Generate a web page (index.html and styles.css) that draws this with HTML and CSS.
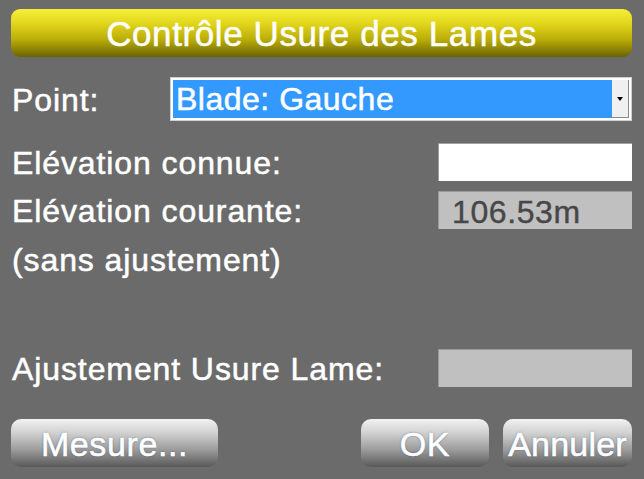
FILE: index.html
```html
<!DOCTYPE html>
<html lang="fr">
<head>
<meta charset="utf-8">
<title>Contrôle Usure des Lames</title>
<link rel="stylesheet" href="styles.css">
</head>
<body>
<div class="dialog">
  <div class="title">Contrôle Usure des Lames</div>

  <div class="row row-point">
    <span class="label">Point:</span>
    <div class="select">
      <span class="select-value">Blade: Gauche</span>
      <span class="select-btn"><span class="arrow"></span></span>
    </div>
  </div>

  <div class="row row-known">
    <span class="label">Elévation connue:</span>
    <div class="field field-white"></div>
  </div>

  <div class="row row-current">
    <span class="label">Elévation courante:</span>
    <div class="field field-gray"><span class="value">106.53m</span></div>
  </div>

  <div class="row row-note">
    <span class="label">(sans ajustement)</span>
  </div>

  <div class="row row-adjust">
    <span class="label">Ajustement Usure Lame:</span>
    <div class="field field-gray"></div>
  </div>

  <div class="buttons">
    <div class="btn btn-measure">Mesure...</div>
    <div class="spacer"></div>
    <div class="btn btn-ok">OK</div>
    <div class="btn btn-cancel">Annuler</div>
  </div>
</div>
</body>
</html>
```

FILE: styles.css
```css
html, body {
  margin: 0;
  padding: 0;
  background: #6b6b6b;
}

body {
  width: 644px;
  height: 479px;
  overflow: hidden;
  font-family: "Liberation Sans", Arial, sans-serif;
  color: #ffffff;
}

.dialog {
  box-sizing: border-box;
  width: 644px;
  height: 479px;
  padding: 9px 12px 0 11px;
  display: flex;
  flex-direction: column;
}

.title {
  height: 48px;
  border-radius: 9px;
  background: linear-gradient(to bottom, #f6ef3a 0%, #e2d61c 30%, #b8ab08 65%, #6a6200 100%);
  display: flex;
  align-items: center;
  justify-content: center;
  font-size: 35px;
  letter-spacing: 0.6px;
  color: #ffffff;
  -webkit-text-stroke: 0.5px #ffffff;
  padding-top: 2px;
  box-sizing: border-box;
}

.row {
  display: flex;
  align-items: center;
  justify-content: space-between;
}

.label {
  font-size: 32px;
  letter-spacing: 0.9px;
  padding-left: 1px;
  padding-top: 2px;
  white-space: nowrap;
  line-height: 1;
  -webkit-text-stroke: 0.5px #ffffff;
}

.row-point { margin-top: 20px; height: 44px; }
.row-known { margin-top: 22px; height: 38px; }
.row-current { margin-top: 10px; height: 38px; }
.row-note { margin-top: 11px; height: 38px; }
.row-adjust { margin-top: 71px; height: 38px; }

.select {
  box-sizing: border-box;
  width: 462px;
  height: 44px;
  border: 1px solid #cfcfcf;
  background: #ffffff;
  padding: 2px;
  display: flex;
}

.select-value {
  flex: 1;
  background: #3399ff;
  font-size: 32px;
  letter-spacing: 0.5px;
  line-height: 38px;
  padding-left: 3px;
  white-space: nowrap;
  -webkit-text-stroke: 0.5px #ffffff;
}

.select-btn {
  box-sizing: border-box;
  width: 17px;
  background: #f0f0f0;
  border-right: 1px solid #8a8a8a;
  border-bottom: 1px solid #8a8a8a;
  display: flex;
  align-items: center;
  justify-content: center;
}

.arrow {
  width: 0;
  height: 0;
  border-left: 3px solid transparent;
  border-right: 3px solid transparent;
  border-top: 4px solid #000000;
}

.field {
  box-sizing: border-box;
  width: 194px;
  height: 38px;
  border-top: 1px solid #a0a0a0;
  border-left: 1px solid #a0a0a0;
  display: flex;
  align-items: center;
}

.field-white { background: #ffffff; }
.field-gray { background: #c0c0c0; border-color: #9a9a9a; }

.value {
  color: #474747;
  font-size: 32px;
  letter-spacing: 0.6px;
  padding-left: 13px;
  padding-top: 2px;
  line-height: 1;
  -webkit-text-stroke: 0.4px #474747;
}

.buttons {
  margin-top: 32px;
  height: 48px;
  display: flex;
  gap: 14px;
}

.spacer { flex: 1; }

.btn {
  box-sizing: border-box;
  height: 48px;
  border-radius: 10px;
  background: linear-gradient(to bottom, #f2f2f2 0%, #cfcfcf 30%, #9a9a9a 65%, #595959 100%);
  display: flex;
  align-items: center;
  justify-content: center;
  font-size: 34px;
  letter-spacing: 0.6px;
  color: #ffffff;
  -webkit-text-stroke: 0.6px #ffffff;
  text-shadow: 0 0 2px rgba(40, 60, 110, 0.8);
  padding-top: 3px;
  white-space: nowrap;
}

.btn-measure { width: 207px; }
.btn-ok { width: 128px; }
.btn-cancel { width: 129px; letter-spacing: 0.2px; }
```
